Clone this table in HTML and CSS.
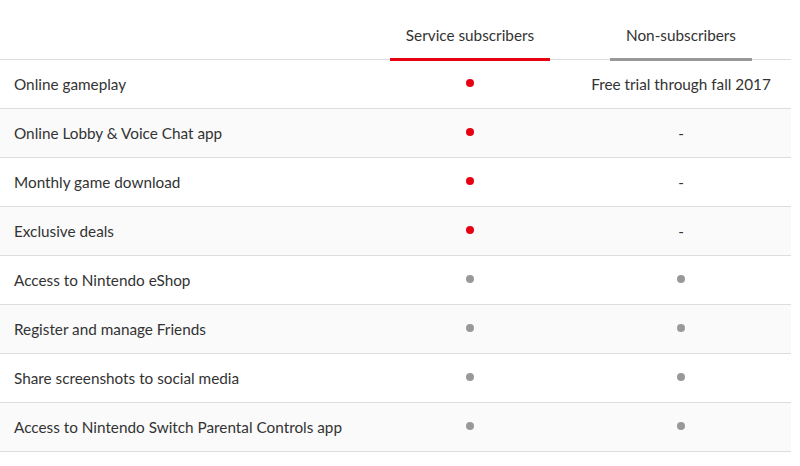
FILE: index.html
```html
<!DOCTYPE html>
<html>
<head>
<meta charset="utf-8">
<link rel="stylesheet" href="styles.css">
</head>
<body>
<div class="table">
  <div class="row head">
    <div class="cell label"></div>
    <div class="cell mid"><span class="tab tab-red">Service subscribers</span></div>
    <div class="cell mid"><span class="tab tab-gray">Non-subscribers</span></div>
  </div>
  <div class="row">
    <div class="cell label">Online gameplay</div>
    <div class="cell mid"><span class="dot red"></span></div>
    <div class="cell mid">Free trial through fall 2017</div>
  </div>
  <div class="row alt">
    <div class="cell label">Online Lobby &amp; Voice Chat app</div>
    <div class="cell mid"><span class="dot red"></span></div>
    <div class="cell mid">-</div>
  </div>
  <div class="row">
    <div class="cell label">Monthly game download</div>
    <div class="cell mid"><span class="dot red"></span></div>
    <div class="cell mid">-</div>
  </div>
  <div class="row alt">
    <div class="cell label">Exclusive deals</div>
    <div class="cell mid"><span class="dot red"></span></div>
    <div class="cell mid">-</div>
  </div>
  <div class="row">
    <div class="cell label">Access to Nintendo eShop</div>
    <div class="cell mid"><span class="dot gray"></span></div>
    <div class="cell mid"><span class="dot gray"></span></div>
  </div>
  <div class="row alt">
    <div class="cell label">Register and manage Friends</div>
    <div class="cell mid"><span class="dot gray"></span></div>
    <div class="cell mid"><span class="dot gray"></span></div>
  </div>
  <div class="row">
    <div class="cell label">Share screenshots to social media</div>
    <div class="cell mid"><span class="dot gray"></span></div>
    <div class="cell mid"><span class="dot gray"></span></div>
  </div>
  <div class="row alt">
    <div class="cell label">Access to Nintendo Switch Parental Controls app</div>
    <div class="cell mid"><span class="dot gray"></span></div>
    <div class="cell mid"><span class="dot gray"></span></div>
  </div>
</div>
</body>
</html>
```
FILE: styles.css
```css
html, body {
  margin: 0;
  padding: 0;
  background: #ffffff;
}
body {
  font-family: Lato, "Open Sans", sans-serif;
  font-size: 15.3px;
  color: #333333;
}
.table {
  width: 791px;
}
.row {
  display: grid;
  grid-template-columns: 365px 210px 212px;
  height: 48px;
  border-bottom: 1px solid #dddddd;
  align-items: center;
}
.row.alt {
  background: #fafafa;
}
.row.head {
  height: 59px;
  align-items: end;
}
.cell.label {
  padding-left: 14px;
}
.cell.mid {
  text-align: center;
  display: flex;
  justify-content: center;
  align-items: center;
}
.tab {
  display: inline-block;
  padding: 0 16px 14px;
  margin-bottom: -2px;
  border-bottom: 3px solid transparent;
}
.tab-red {
  border-bottom-color: #e60012;
}
.tab-gray {
  border-bottom-color: #999999;
}
.dot {
  display: block;
  width: 8px;
  height: 8px;
  border-radius: 50%;
  margin-top: -3px;
}
.dot.red {
  background: #e60012;
}
.dot.gray {
  background: #999999;
}
```
